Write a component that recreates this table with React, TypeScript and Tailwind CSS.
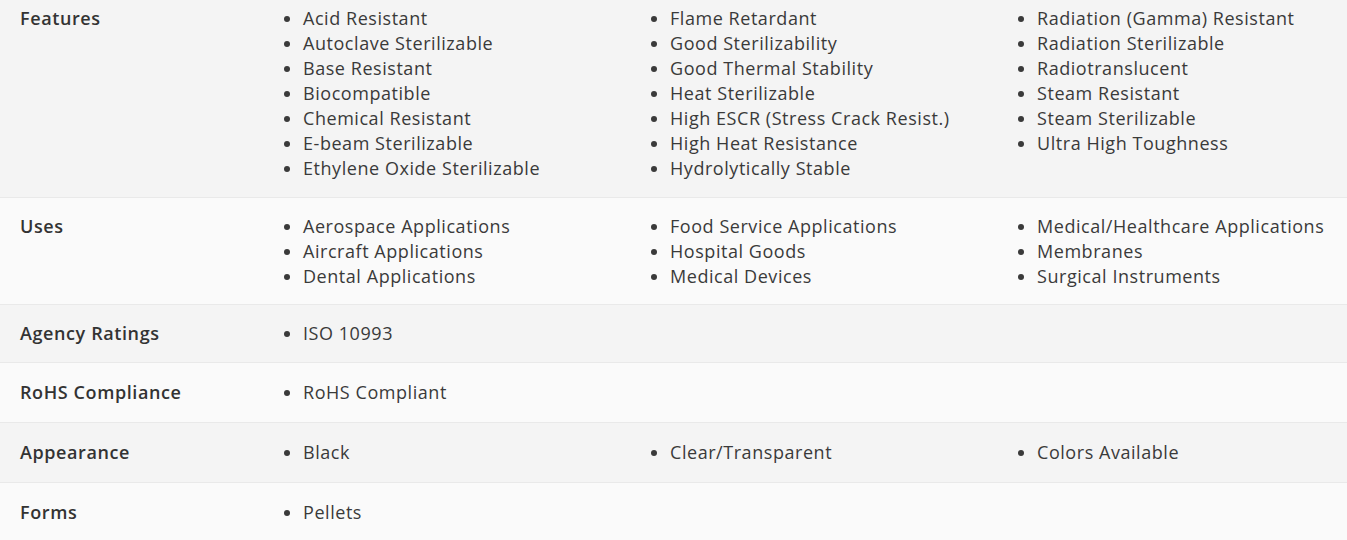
import React from 'react';

type Row = {
  label: string;
  cols: string[][];
  pad: string;
  bg: string;
};

const rows: Row[] = [
  {
    label: 'Features',
    pad: 'pt-[6px] pb-4',
    bg: 'bg-[#f4f4f4]',
    cols: [
      [
        'Acid Resistant',
        'Autoclave Sterilizable',
        'Base Resistant',
        'Biocompatible',
        'Chemical Resistant',
        'E-beam Sterilizable',
        'Ethylene Oxide Sterilizable',
      ],
      [
        'Flame Retardant',
        'Good Sterilizability',
        'Good Thermal Stability',
        'Heat Sterilizable',
        'High ESCR (Stress Crack Resist.)',
        'High Heat Resistance',
        'Hydrolytically Stable',
      ],
      [
        'Radiation (Gamma) Resistant',
        'Radiation Sterilizable',
        'Radiotranslucent',
        'Steam Resistant',
        'Steam Sterilizable',
        'Ultra High Toughness',
      ],
    ],
  },
  {
    label: 'Uses',
    pad: 'pt-4 pb-[15px]',
    bg: 'bg-[#fafafa]',
    cols: [
      ['Aerospace Applications', 'Aircraft Applications', 'Dental Applications'],
      ['Food Service Applications', 'Hospital Goods', 'Medical Devices'],
      ['Medical/Healthcare Applications', 'Membranes', 'Surgical Instruments'],
    ],
  },
  {
    label: 'Agency Ratings',
    pad: 'py-4',
    bg: 'bg-[#f4f4f4]',
    cols: [['ISO 10993']],
  },
  {
    label: 'RoHS Compliance',
    pad: 'py-[17px]',
    bg: 'bg-[#fafafa]',
    cols: [['RoHS Compliant']],
  },
  {
    label: 'Appearance',
    pad: 'py-[17px]',
    bg: 'bg-[#f4f4f4]',
    cols: [['Black'], ['Clear/Transparent'], ['Colors Available']],
  },
  {
    label: 'Forms',
    pad: 'py-[17px]',
    bg: 'bg-[#fafafa]',
    cols: [['Pellets']],
  },
];

const Bullet = ({ text }: { text: string }) => (
  <li className="flex items-center whitespace-nowrap">
    <span className="ml-[1px] mr-[13px] h-[6px] w-[6px] shrink-0 rounded-full bg-[#3a3a3a]" />
    <span>{text}</span>
  </li>
);

export default function App() {
  return (
    <div
      className="w-[1347px] h-[540px] overflow-hidden bg-[#fafafa] text-[#333333]"
      style={{ fontFamily: '"Open Sans", "Liberation Sans", sans-serif' }}
    >
      {rows.map((row) => (
        <div key={row.label} className={`flex border-b border-[#e9e9e9] ${row.bg} ${row.pad}`}>
          <div className="w-[283px] shrink-0 pl-5 text-[18px] font-semibold leading-[25px] tracking-[0.6px] text-[#333333]">
            {row.label}
          </div>
          <div className="grid flex-1 grid-cols-[367px_367px_1fr] text-[18px] leading-[25px] tracking-[0.55px] text-[#3a3a3a]">
            {row.cols.map((col, i) => (
              <ul key={i}>
                {col.map((t) => (
                  <Bullet key={t} text={t} />
                ))}
              </ul>
            ))}
          </div>
        </div>
      ))}
    </div>
  );
}
